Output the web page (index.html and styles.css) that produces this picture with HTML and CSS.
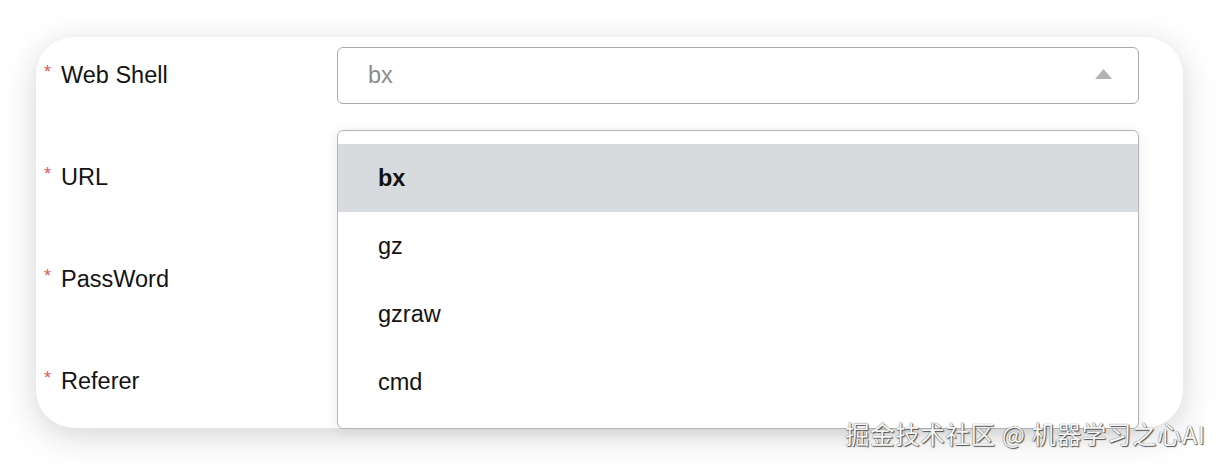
FILE: index.html
```html
<!DOCTYPE html>
<html lang="zh">
<head>
<meta charset="utf-8">
<title>Web Shell form</title>
<link rel="stylesheet" href="styles.css">
</head>
<body>
<div class="page">
  <div class="card">
    <div class="form">
      <div class="row">
        <label class="label"><span class="req">*</span>Web Shell</label>
        <div class="field select-wrap">
          <div class="select">
            <span class="select-value">bx</span>
            <svg class="caret" width="17" height="10" viewBox="0 0 17 10"><path d="M0 10 L8.5 0 L17 10 Z" fill="#b3b3b3"/></svg>
          </div>
          <ul class="dropdown">
            <li class="option active">bx</li>
            <li class="option">gz</li>
            <li class="option">gzraw</li>
            <li class="option">cmd</li>
          </ul>
        </div>
      </div>
      <div class="row">
        <label class="label"><span class="req">*</span>URL</label>
        <div class="field"><div class="input"></div></div>
      </div>
      <div class="row">
        <label class="label"><span class="req">*</span>PassWord</label>
        <div class="field"><div class="input"></div></div>
      </div>
      <div class="row">
        <label class="label"><span class="req">*</span>Referer</label>
        <div class="field"><div class="input"></div></div>
      </div>
    </div>
  </div>
  <div class="watermark">掘金技术社区 @ 机器学习之心AI</div>
</div>
</body>
</html>
```

FILE: styles.css
```css
* { box-sizing: border-box; }
html, body {
  margin: 0;
  padding: 0;
  background: #ffffff;
  width: 1220px;
  height: 464px;
  overflow: hidden;
  font-family: "Liberation Sans", Arial, sans-serif;
}
.page {
  position: relative;
  width: 1220px;
  height: 464px;
  padding: 37px 37px 0 36px;
}
.card {
  width: 1147px;
  height: 391px;
  background: #ffffff;
  border-radius: 38px;
  box-shadow: 0 8px 34px rgba(0, 0, 0, 0.17);
  padding: 10px 44px 0 8px;
}
.form {
  display: flex;
  flex-direction: column;
}
.row {
  display: grid;
  grid-template-columns: 293px 1fr;
  height: 102px;
}
.label {
  font-size: 23.5px;
  line-height: 57px;
  color: #141414;
  white-space: nowrap;
}
.req {
  color: #e0575b;
  font-size: 18px;
  position: relative;
  top: -5px;
  margin-right: 10px;
}
.field {
  height: 57px;
}
.select-wrap {
  position: relative;
}
.select, .input {
  height: 57px;
  border: 1.5px solid #a9a9b2;
  border-radius: 6px;
  background: #fff;
}
.select {
  display: flex;
  align-items: center;
  justify-content: space-between;
  padding: 0 26px 0 30px;
}
.select-value {
  font-size: 23.5px;
  line-height: 57px;
  color: #8c8c8c;
}
.caret {
  margin-top: -3px;
}
.dropdown {
  position: absolute;
  z-index: 5;
  left: 0;
  right: 0;
  top: 83px;
  margin: 0;
  list-style: none;
  padding: 13px 0 12px;
  background: #fff;
  border: 1.5px solid #b3b3bc;
  border-radius: 6px;
  box-shadow: 0 2px 14px rgba(0, 0, 0, 0.09);
}
.option {
  height: 68px;
  line-height: 68px;
  padding-left: 40px;
  font-size: 23.5px;
  color: #141414;
}
.option.active {
  background: #d8dbde;
  font-weight: bold;
  color: #111;
}
.watermark {
  position: absolute;
  z-index: 10;
  left: 845px;
  top: 417px;
  font-family: "Noto Sans CJK SC", "Liberation Sans", sans-serif;
  font-size: 24.5px;
  letter-spacing: 0.6px;
  line-height: 34px;
  color: #f6f6f6;
  white-space: nowrap;
  text-shadow: 0 0 1px #3a3a3a, 1px 1px 1px #555;
}
```
